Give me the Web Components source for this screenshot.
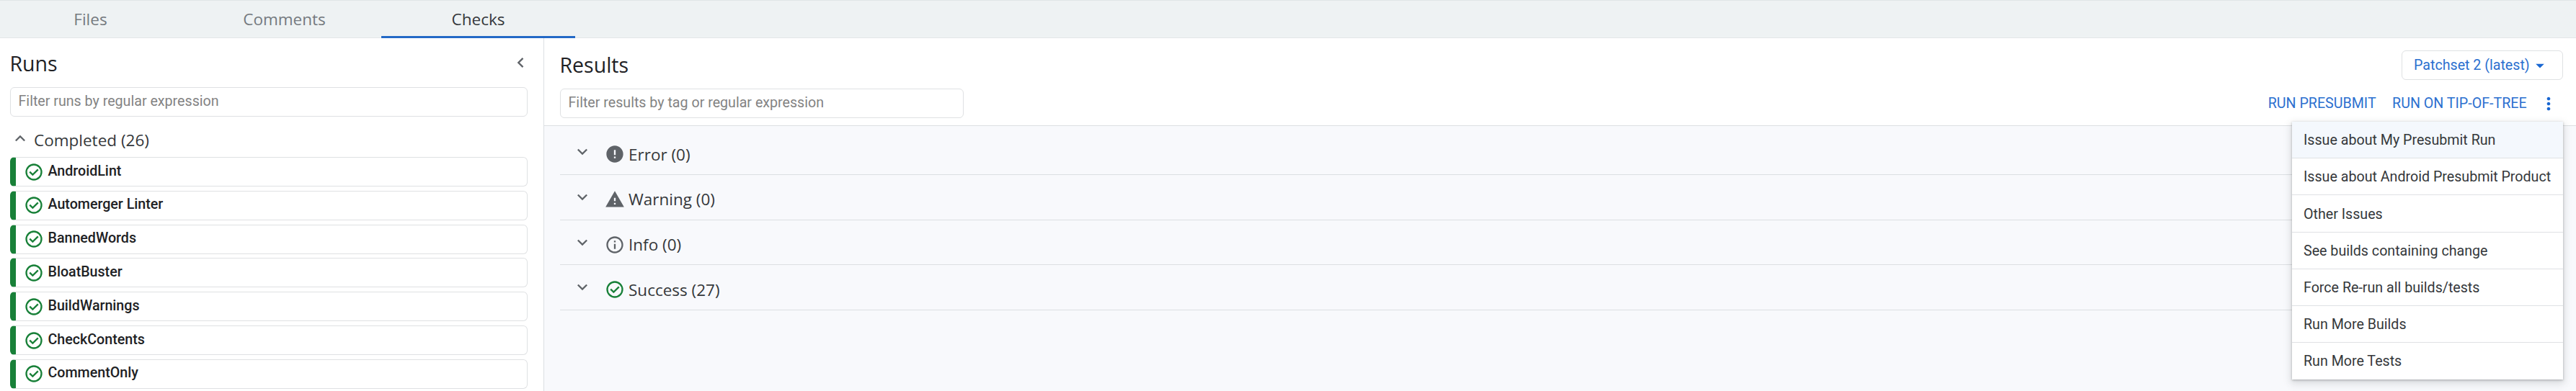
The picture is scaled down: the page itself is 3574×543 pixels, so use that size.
<!DOCTYPE html>
<html lang="en">
<head>
<meta charset="utf-8">
<title>Checks</title>
<style>
html, body { margin: 0; height: 100%; overflow: hidden; background: #fff; }
body { font: 400 19.65px/28px Roboto, sans-serif; color: #202124; }
</style>
</head>
<body>
<checks-page></checks-page>
<script>
const define = (name, html, after) => {
  const template = document.createElement('template');
  template.innerHTML = html;
  customElements.define(name, class extends HTMLElement {
    connectedCallback() {
      if (this.shadowRoot) return;
      this.attachShadow({ mode: 'open' }).append(template.content.cloneNode(true));
      if (after) after(this, this.shadowRoot);
    }
  });
};

const ICONS = {
  check: ['0 -960 960 960', 'm424-296 282-282-56-56-226 226-114-114-56 56 170 170Zm56 216q-83 0-156-31.500T197-197q-54-54-85.500-127T80-480q0-83 31.500-156T197-763q54-54 127-85.500T480-880q83 0 156 31.500T763-763q54 54 85.500 127T880-480q0 83-31.500 156T763-197q-54 54-127 85.500T480-80Zm0-80q134 0 227-93t93-227q0-134-93-227t-227-93q-134 0-227 93t-93 227q0 134 93 227t227 93Z'],
  error: ['0 0 24 24', 'M12 2C6.480 2 2 6.480 2 12s4.480 10 10 10 10-4.480 10-10S17.520 2 12 2zm1 15h-2v-2h2v2zm0-4h-2V7h2v6z'],
  warning: ['0 0 24 24', 'M1 21h22L12 2 1 21zm12-3h-2v-2h2v2zm0-4h-2v-4h2v4z'],
  info: ['0 0 24 24', 'M11 7h2v2h-2zm0 4h2v6h-2zm1-9C6.480 2 2 6.480 2 12s4.480 10 10 10 10-4.480 10-10S17.520 2 12 2zm0 18c-4.410 0-8-3.590-8-8s3.590-8 8-8 8 3.590 8 8-3.590 8-8 8z'],
  down: ['0 0 24 24', 'M7.410 8.300 12 12.880l4.590-4.580L18 9.710l-6 6-6-6z'],
  up: ['0 0 24 24', 'M7.410 15.700 12 11.120l4.590 4.580L18 14.290l-6-6-6 6z'],
  left: ['0 0 24 24', 'M15.700 7.410 11.120 12l4.580 4.590L14.290 18l-6-6 6-6z'],
  more: ['0 0 24 24', 'M12 8c1.100 0 2-.9 2-2s-.9-2-2-2-2 .9-2 2 .9 2 2 2zm0 2c-1.100 0-2 .9-2 2s.9 2 2 2 2-.9 2-2-.9-2-2-2zm0 6c-1.100 0-2 .9-2 2s.9 2 2 2 2-.9 2-2-.9-2-2-2z'],
  caret: ['0 0 24 24', 'M7 10l5 5 5-5z']
};

define('gr-icon', `<style>
:host { display: block; flex: none; width: 28px; height: 28px; color: #5f6368; }
:host([kind="check"]) { color: #188038; }
:host([kind="more"]), :host([kind="caret"]) { color: #1967d2; }
svg { display: block; width: 100%; height: 100%; fill: currentColor; }
</style><svg><path/></svg>`, (host, root) => {
  const [box, d] = ICONS[host.getAttribute('kind')];
  root.querySelector('svg').setAttribute('viewBox', box);
  root.querySelector('path').setAttribute('d', d);
});

define('gr-tab', `<style>
:host { display: block; box-sizing: border-box; width: 269px; height: 51px; padding-top: 2px;
  font: 400 22.5px/48px "Open Sans", sans-serif; color: #757a7f; text-align: center; }
:host([selected]) { color: #35383b; border-bottom: 3px solid #2369c6; height: 52px; }
</style><slot></slot>`);

define('gr-tabs', `<style>
:host { display: flex; box-sizing: border-box; height: 53px; background: #eef2f3;
  box-shadow: inset 0 1px #e0e5e7, inset 0 -1px #e2e6e8; }
nav { display: flex; margin-left: -9px; padding-top: 1px; height: 52px; }
</style><nav><slot></slot></nav>`);

define('filter-box', `<style>
:host { display: flex; align-items: center; box-sizing: border-box; height: 41px; border: 1px solid #dfe1e3;
  border-radius: 6px; padding: 0 0 var(--drop, 2px) 10.500px; background: #fff; color: #838383; }
</style><span><slot></slot></span>`);

define('check-run', `<style>
:host { display: flex; align-items: center; box-sizing: border-box; height: 41px; margin-bottom: 5.830px;
  border: 1px solid #dfe1e3; border-left: 8px solid #188038; border-radius: 6px; padding-left: 11px; }
gr-icon { margin-right: 5.500px; }
span { font-weight: 500; padding-bottom: 2px; }
</style><gr-icon kind="check"></gr-icon><span><slot></slot></span>`);

define('runs-panel', `<style>
:host { display: block; box-sizing: border-box; width: 755px; flex: none; padding: 15px 22px 0 14px; border-right: 1px solid #dcdfe3; background: #fff; overflow: hidden; }
.head { display: flex; justify-content: space-between; height: 40px; margin-left: -0.500px; }
h2 { margin: 0; font: 400 28.500px/40px "Open Sans", sans-serif; }
.head gr-icon { margin: 5px -3.500px 0 0; }
filter-box { margin-top: 13px; }
.group { display: flex; height: 34px; margin: 16px 0 6px; font: 400 22.500px/34px "Open Sans", sans-serif; color: #35383b; }
.group gr-icon { margin: 0 5px 0 0; }
</style>
<div class="head"><h2>Runs</h2><gr-icon kind="left"></gr-icon></div>
<filter-box>Filter runs by regular expression</filter-box>
<div class="group"><gr-icon kind="up"></gr-icon><span>Completed (26)</span></div>
<slot></slot>`);

define('result-section', `<style>
:host { display: flex; box-sizing: border-box; height: 62.600px; border-bottom: 1px solid #dcdfe2; padding-left: 17px;
  font: 400 22.500px/34px "Open Sans", sans-serif; color: #35383b; }
.chevron { margin-top: 17px; margin-right: 17px; }
::slotted(gr-icon) { margin-top: 20px; margin-right: 5px; }
.label { margin-top: 17.500px; }
</style><gr-icon class="chevron" kind="down"></gr-icon><slot name="icon"></slot><span class="label"><slot></slot></span>`);

define('menu-item', `<style>
:host { display: block; box-sizing: border-box; height: 51.200px; padding: 12.300px 16px 0; border-bottom: 1px solid #dfe1e4; white-space: nowrap; color: #35383b; }
:host([active]) { background: #f4f8fd; }
:host(:last-of-type) { border-bottom: 0; }
</style><slot></slot>`);

define('action-menu', `<style>
:host { display: block; background: #fff; box-shadow: 0 1px 3px rgba(60,64,67,.35), 0 4px 10px 2px rgba(60,64,67,.15); }
</style><slot></slot>`);

define('results-panel', `<style>
:host { display: flex; flex-direction: column; flex: 1; min-width: 0; background: #f8f9fc; }
header { display: flex; justify-content: space-between; box-sizing: border-box; height: 122px; padding: 16.500px 18px 0 22px; background: #fff; border-bottom: 1px solid #dcdfe2; }
h2 { margin: 0 0 13px -0.500px; font: 400 28.500px/40px "Open Sans", sans-serif; }
filter-box { width: 560px; --drop: 1px; }
.right { position: relative; display: flex; flex-direction: column; align-items: flex-end; color: #2c70cf; }
.patchset { display: flex; align-items: center; box-sizing: border-box; width: 224px; height: 41px; border: 1px solid #dfe1e3; border-radius: 6px; padding: 1px 0 0 16px; }
.patchset gr-icon { margin-top: 1px; }
.actions { display: flex; align-items: center; gap: 22.400px; margin-top: 19.500px; height: 28px; padding-right: 6px; }
.actions gr-icon { margin: 0 0 0 -6px; }
action-menu { position: absolute; top: 99.500px; right: 0; width: 376px; }
main { padding: 5.400px 18px 0 22px; }
</style>
<header>
  <div><h2>Results</h2><filter-box>Filter results by tag or regular expression</filter-box></div>
  <div class="right">
    <div class="patchset"><span>Patchset 2 (latest)</span><gr-icon kind="caret"></gr-icon></div>
    <div class="actions"><span>RUN PRESUBMIT</span><span>RUN ON TIP-OF-TREE</span><gr-icon kind="more"></gr-icon></div>
    <action-menu>
      <menu-item active>Issue about My Presubmit Run</menu-item>
      <menu-item>Issue about Android Presubmit Product</menu-item>
      <menu-item>Other Issues</menu-item>
      <menu-item>See builds containing change</menu-item>
      <menu-item>Force Re-run all builds/tests</menu-item>
      <menu-item>Run More Builds</menu-item>
      <menu-item>Run More Tests</menu-item>
    </action-menu>
  </div>
</header>
<main><slot></slot></main>`);

define('checks-page', `<style>
:host { display: flex; flex-direction: column; height: 100vh; overflow: hidden; }
gr-tabs { flex: none; }
.body { display: flex; flex: 1; min-height: 0; }
</style>
<gr-tabs><gr-tab>Files</gr-tab><gr-tab>Comments</gr-tab><gr-tab selected>Checks</gr-tab></gr-tabs>
<div class="body">
  <runs-panel>
    <check-run>AndroidLint</check-run>
    <check-run>Automerger Linter</check-run>
    <check-run>BannedWords</check-run>
    <check-run>BloatBuster</check-run>
    <check-run>BuildWarnings</check-run>
    <check-run>CheckContents</check-run>
    <check-run>CommentOnly</check-run>
  </runs-panel>
  <results-panel>
    <result-section><gr-icon slot="icon" kind="error"></gr-icon>Error (0)</result-section>
    <result-section><gr-icon slot="icon" kind="warning"></gr-icon>Warning (0)</result-section>
    <result-section><gr-icon slot="icon" kind="info"></gr-icon>Info (0)</result-section>
    <result-section><gr-icon slot="icon" kind="check"></gr-icon>Success (27)</result-section>
  </results-panel>
</div>`);
</script>
</body>
</html>
